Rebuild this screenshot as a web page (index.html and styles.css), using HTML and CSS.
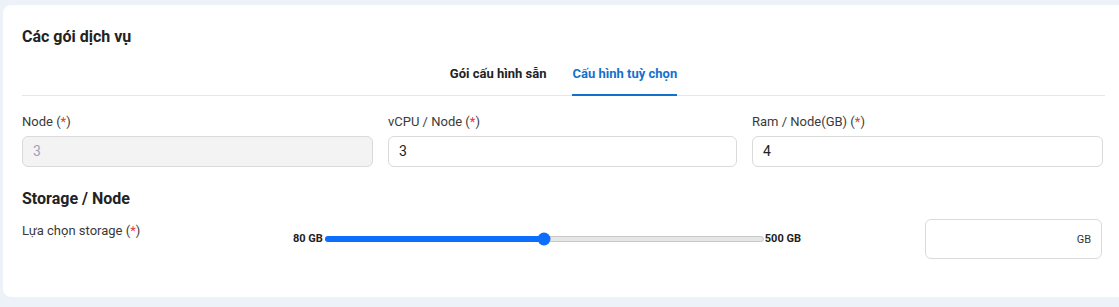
FILE: index.html
```html
<!DOCTYPE html>
<html lang="vi">
<head>
<meta charset="utf-8">
<link rel="stylesheet" href="styles.css">
</head>
<body>
<div class="card">
  <h2 class="title">Các gói dịch vụ</h2>
  <div class="tabs">
    <div class="tab">Gói cấu hình sẵn</div>
    <div class="tab active">Cấu hình tuỳ chọn</div>
  </div>
  <div class="grid">
    <div class="field">
      <label class="label">Node (<span class="req">*</span>)</label>
      <div class="input disabled">3</div>
    </div>
    <div class="field">
      <label class="label">vCPU / Node (<span class="req">*</span>)</label>
      <div class="input">3</div>
    </div>
    <div class="field">
      <label class="label">Ram / Node(GB) (<span class="req">*</span>)</label>
      <div class="input">4</div>
    </div>
  </div>
  <h3 class="subtitle">Storage / Node</h3>
  <div class="storage">
    <label class="label storage-label">Lựa chọn storage (<span class="req">*</span>)</label>
    <div class="slider">
      <span class="end">80 GB</span>
      <div class="track">
        <div class="fill" style="width: 50%"></div>
        <div class="thumb" style="left: 50%"></div>
      </div>
      <span class="end">500 GB</span>
    </div>
    <div class="gb-box"><span>GB</span></div>
  </div>
</div>
</body>
</html>
```

FILE: styles.css
```css
* { box-sizing: border-box; }
html, body { margin: 0; padding: 0; overflow: hidden; }
body {
  background: #edf1f8;
  font-family: Roboto, "Liberation Sans", sans-serif;
  color: #222;
  width: 1119px;
  height: 307px;
}
.card {
  background: #fff;
  margin: 5px 0 0 3px;
  width: 1130px;
  height: 292px;
  border-radius: 8px;
  padding: 22px 28px 0 19px;
}
.title {
  margin: 0;
  font-size: 16px;
  font-weight: 700;
  line-height: 20px;
  color: #222;
}
.tabs {
  display: flex;
  justify-content: center;
  gap: 26px;
  margin-top: 7px;
  border-bottom: 1px solid #e6e6e6;
}
.tab {
  font-size: 13px;
  font-weight: 700;
  line-height: 16px;
  padding: 12px 0 12px;
  color: #222;
  border-bottom: 2px solid transparent;
  margin-bottom: -1px;
}
.tab.active {
  color: #1570cd;
  border-bottom-color: #1570cd;
}
.grid {
  display: grid;
  grid-template-columns: 351px 349px 351px;
  column-gap: 15px;
  margin-top: 18px;
}
.label {
  display: block;
  font-size: 13px;
  line-height: 16px;
  color: #3a3a3a;
}
.req { color: #e53935; }
.input {
  margin-top: 6px;
  height: 31px;
  border: 1px solid #dadada;
  border-radius: 6px;
  font-size: 14px;
  line-height: 29px;
  padding: 0 10px;
  color: #222;
}
.input.disabled {
  background: #f3f3f3;
  color: #a89bc0;
}
.subtitle {
  margin: 22px 0 0;
  font-size: 16px;
  font-weight: 700;
  line-height: 20px;
  color: #222;
}
.storage {
  display: flex;
  align-items: center;
  margin-top: 10px;
  height: 40px;
}
.storage-label {
  width: 271px;
  align-self: flex-start;
  margin-top: 4px;
}
.slider {
  display: flex;
  align-items: center;
  width: 508px;
}
.end {
  font-size: 11px;
  font-weight: 700;
  color: #222;
  line-height: 14px;
}
.track {
  position: relative;
  flex: 1;
  height: 6px;
  border-radius: 3px;
  background: #e6e6e6;
  border: 1px solid #c9c9c9;
  margin: 0 1px 0 2px;
}
.fill {
  position: absolute;
  left: -1px;
  top: -1px;
  bottom: -1px;
  background: #0d6efd;
  border-radius: 3px;
}
.thumb {
  position: absolute;
  top: 50%;
  width: 13px;
  height: 13px;
  border-radius: 50%;
  background: #0d6efd;
  transform: translate(-50%, -50%);
}
.gb-box {
  margin-left: auto;
  margin-right: 3px;
  width: 177px;
  height: 40px;
  border: 1px solid #dadada;
  border-radius: 6px;
  display: flex;
  align-items: center;
  justify-content: flex-end;
  padding-right: 10px;
  font-size: 11px;
  color: #333;
}
```
